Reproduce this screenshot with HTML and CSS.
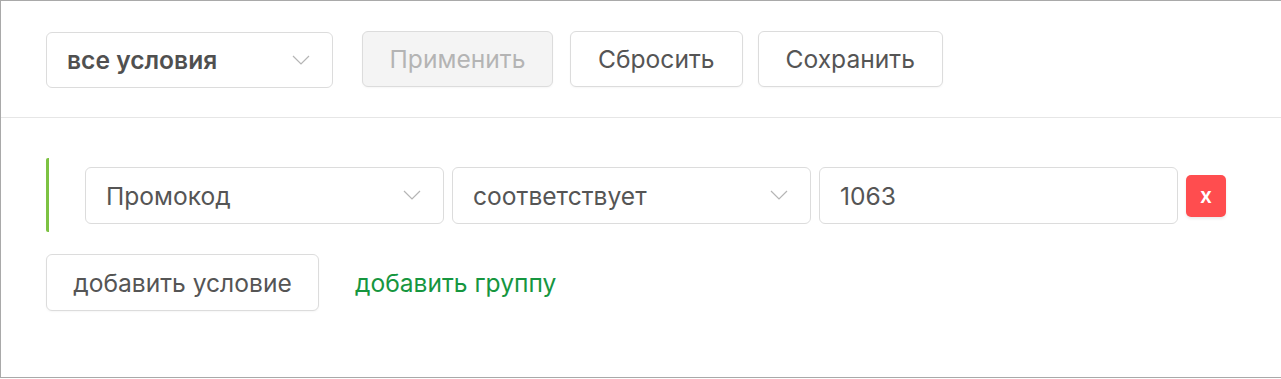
FILE: index.html
```html
<!DOCTYPE html>
<html lang="ru">
<head>
    <meta charset="UTF-8">
    <title>Фильтр условий</title>
    <link rel="stylesheet" href="styles.css">
</head>
<body>
    <div class="panel">
        <div class="toolbar">
            <div class="select select-mode">
                <span>все условия</span>
                <svg class="chevron" viewBox="0 0 18 11"><path d="M1 1l8 8 8-8"/></svg>
            </div>
            <button class="btn btn-apply" disabled>Применить</button>
            <button class="btn">Сбросить</button>
            <button class="btn">Сохранить</button>
        </div>

        <div class="content">
            <div class="group">
                <div class="condition">
                    <div class="select field">
                        <span>Промокод</span>
                        <svg class="chevron" viewBox="0 0 18 11"><path d="M1 1l8 8 8-8"/></svg>
                    </div>
                    <div class="select field">
                        <span>соответствует</span>
                        <svg class="chevron" viewBox="0 0 18 11"><path d="M1 1l8 8 8-8"/></svg>
                    </div>
                    <input class="field value" type="text" value="1063">
                    <button class="remove">x</button>
                </div>
            </div>

            <div class="actions">
                <button class="btn btn-add">добавить условие</button>
                <a class="link" href="#">добавить группу</a>
            </div>
        </div>
    </div>
</body>
</html>
```

FILE: styles.css
```css
* {
    margin: 0;
    padding: 0;
    box-sizing: border-box;
}

body {
    font-family: Inter, "Noto Sans", sans-serif;
    background: white;
    color: #555;
}

.panel {
    width: 1290px;
    height: 378px;
    border: 1px solid #a9a9a9;
}

.toolbar {
    display: flex;
    align-items: center;
    height: 117px;
    padding: 0 45px;
    border-bottom: 1px solid #e6e6e6;
}

.select {
    display: flex;
    align-items: center;
    justify-content: space-between;
    height: 56px;
    padding: 0 22px 0 20px;
    border: 1px solid #dcdcdc;
    border-radius: 6px;
    background: white;
    font-size: 24.6px;
}

.select-mode {
    width: 287px;
    margin-top: 2px;
    font-weight: 600;
    color: #505050;
}

.chevron {
    width: 18px;
    height: 11px;
    fill: none;
    stroke: #b5b5b5;
    stroke-width: 1.2;
}

.btn {
    height: 56px;
    padding: 0 27px;
    border: 1px solid #dcdcdc;
    border-radius: 6px;
    background: white;
    font-family: inherit;
    font-size: 24.6px;
    color: #555;
    box-shadow: 0 1px 2px rgba(0,0,0,0.04);
    cursor: pointer;
}

.toolbar .btn {
    margin-left: 17px;
}

.toolbar .btn:last-child {
    margin-left: 15px;
}

.toolbar .btn-apply {
    margin-left: 29px;
    width: 191px;
    padding: 0;
    background: #f4f4f4;
    color: #b4b4b4;
    cursor: default;
}

.content {
    padding: 40px 45px 0;
}

.group {
    border-left: 3px solid #7cc242;
    border-radius: 2px;
    padding: 9px 0 8px 36px;
}

.condition {
    display: flex;
    align-items: center;
    gap: 8px;
}

.field {
    width: 359px;
    height: 57px;
}

.value {
    padding: 0 20px;
    border: 1px solid #dcdcdc;
    border-radius: 6px;
    font-family: inherit;
    font-size: 24.6px;
    color: #555;
    outline: none;
}

.remove {
    width: 40px;
    height: 42px;
    border: none;
    border-radius: 5px;
    background: #ff4d4f;
    color: white;
    font-family: inherit;
    font-size: 21px;
    font-weight: 600;
    box-shadow: 0 2px 3px rgba(0,0,0,0.08);
    cursor: pointer;
}

.actions {
    display: flex;
    align-items: center;
    gap: 36px;
    margin-top: 22px;
}

.btn-add {
    width: 273px;
    height: 57px;
    padding: 0;
}

.link {
    font-size: 24.6px;
    color: #16963f;
    text-decoration: none;
}
```
